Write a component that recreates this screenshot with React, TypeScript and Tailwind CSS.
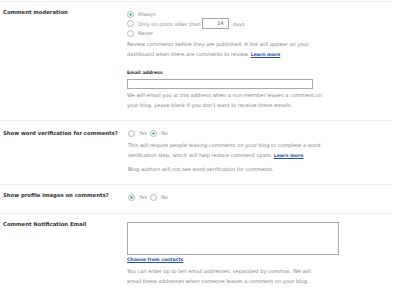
import React from "react";

function Radio({ checked }: { checked?: boolean }) {
  return (
    <svg width="7" height="7" viewBox="0 0 7 7" className="shrink-0">
      <circle cx="3.5" cy="3.5" r="3" fill="#ffffff" stroke="#93a7c0" strokeWidth="0.8" />
      {checked && <circle cx="3.5" cy="3.5" r="1.2" fill="#45ad45" />}
    </svg>
  );
}

function Opt({ checked, label, className = "" }: { checked?: boolean; label: string; className?: string }) {
  return (
    <span className={`flex items-center ${className}`}>
      <Radio checked={checked} />
      <span className="ml-[4px]">{label}</span>
    </span>
  );
}

export default function App() {
  return (
    <div
      className="w-[400px] h-[296px] bg-white overflow-hidden pt-[1px] text-[5.1px] leading-[10px] text-[#808080]"
      style={{ fontFamily: '"DejaVu Sans", Verdana, sans-serif' }}
    >
      {/* Section 1 */}
      <div className="w-[392px] h-[119px] border-t border-[#ececec] grid grid-cols-[127px_1fr]">
        <div className="pl-[3px] pt-[5px] text-[5.3px] font-bold text-[#333]">Comment moderation</div>
        <div className="pt-[7px]">
          <Opt checked label="Always" className="h-[10px] text-[#8a8a8a]" />
          <div className="h-[9px] flex items-center text-[#8a8a8a]">
            <Opt label="Only on posts older than" />
            <div className="ml-[1px] w-[27px] h-[11px] border border-[#9aa6b4] bg-white text-right pr-[4px] text-[5.3px] leading-[9px] text-[#555]">
              14
            </div>
            <span className="ml-[4px]">days</span>
          </div>
          <Opt label="Never" className="h-[10px] text-[#8a8a8a]" />
          <div className="mt-[1px]">
            <div>Review comments before they are published. A link will appear on your</div>
            <div>
              dashboard when there are comments to review.{" "}
              <span className="text-[4.6px] font-bold text-[#1f4fa0] underline">Learn more</span>
            </div>
          </div>
          <div className="mt-[8px] text-[4.5px] font-bold text-[#333]">Email address</div>
          <div className="mt-[1px] w-[186px] h-[10px] border border-[#a9a9a9] bg-white" />
          <div className="mt-[1px]">
            <div>We will email you at this address when a non-member leaves a comment on</div>
            <div>your blog. Leave blank if you don't want to receive these emails.</div>
          </div>
        </div>
      </div>

      {/* Section 2 */}
      <div className="w-[392px] h-[64px] border-t border-[#ececec] grid grid-cols-[127px_1fr]">
        <div className="pl-[3px] pt-[7px] text-[5.3px] font-bold text-[#333]">Show word verification for comments?</div>
        <div className="pt-[7px] pl-[1px]">
          <div className="h-[10px] flex items-center text-[#8a8a8a]">
            <Opt label="Yes" />
            <Opt checked label="No" className="ml-[3px]" />
          </div>
          <div className="mt-[2px]">
            <div>This will require people leaving comments on your blog to complete a word</div>
            <div>
              verification step, which will help reduce comment spam.{" "}
              <span className="text-[4.6px] font-bold text-[#1f4fa0] underline">Learn more</span>
            </div>
          </div>
          <div className="mt-[3px]">Blog authors will not see word verification for comments.</div>
        </div>
      </div>

      {/* Section 3 */}
      <div className="w-[392px] h-[29px] border-t border-[#ececec] grid grid-cols-[127px_1fr]">
        <div className="pl-[3px] pt-[5px] text-[5.3px] font-bold text-[#333]">Show profile images on comments?</div>
        <div className="pt-[7px] pl-[1px]">
          <div className="h-[10px] flex items-center text-[#8a8a8a]">
            <Opt checked label="Yes" />
            <Opt label="No" className="ml-[3px]" />
          </div>
        </div>
      </div>

      {/* Section 4 */}
      <div className="w-[392px] h-[83px] border-t border-[#ececec] grid grid-cols-[127px_1fr]">
        <div className="pl-[3px] pt-[5px] text-[5.3px] font-bold text-[#333]">Comment Notification Email</div>
        <div className="pt-[8px]">
          <div className="w-[212px] h-[33px] border border-[#a9a9a9] bg-white" />
          <div className="text-[4.6px] font-bold text-[#1f4fa0] underline">Choose from contacts</div>
          <div className="mt-[1px]">
            <div>You can enter up to ten email addresses, separated by commas. We will</div>
            <div>email these addresses when someone leaves a comment on your blog.</div>
          </div>
        </div>
      </div>
    </div>
  );
}
